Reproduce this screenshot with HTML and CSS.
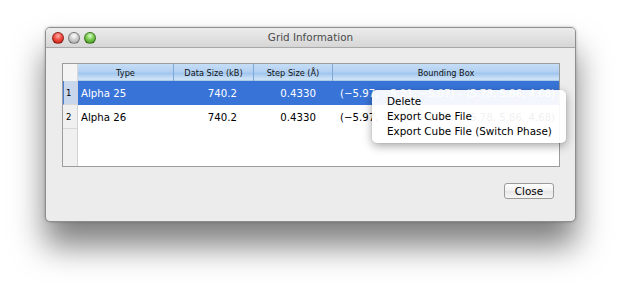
FILE: index.html
```html
<!DOCTYPE html>
<html>
<head>
<meta charset="utf-8">
<link rel="stylesheet" href="styles.css">
</head>
<body>
<div class="stage">
  <div class="window">
    <div class="titlebar">
      <div class="lights">
        <span class="light red"></span>
        <span class="light gray"></span>
        <span class="light green"></span>
      </div>
      <div class="title">Grid Information</div>
    </div>
    <div class="content">
      <div class="table">
        <div class="row head">
          <div class="cell rh"></div>
          <div class="cell hc">Type</div>
          <div class="cell hc">Data Size (kB)</div>
          <div class="cell hc">Step Size (Å)</div>
          <div class="cell hc last">Bounding Box</div>
        </div>
        <div class="row sel">
          <div class="cell rh">1</div>
          <div class="cell t">Alpha 25</div>
          <div class="cell n">740.2</div>
          <div class="cell n">0.4330</div>
          <div class="cell b">(−5.97, −5.21, −5.07) – (5.78, 5.86, 4.68)</div>
        </div>
        <div class="row">
          <div class="cell rh">2</div>
          <div class="cell t">Alpha 26</div>
          <div class="cell n">740.2</div>
          <div class="cell n">0.4330</div>
          <div class="cell b">(−5.97, −5.21, −5.07) – (5.78, 5.86, 4.68)</div>
        </div>
        <div class="filler">
          <div class="rhfill"></div>
        </div>
      </div>
      <div class="footer">
        <button class="btn">Close</button>
      </div>
    </div>
  </div>
  <div class="menu">
    <div class="item">Delete</div>
    <div class="item">Export Cube File</div>
    <div class="item">Export Cube File (Switch Phase)</div>
  </div>
</div>
</body>
</html>
```
FILE: styles.css
```css
html, body {
  margin: 0;
  padding: 0;
  background: #ffffff;
  font-family: "DejaVu Sans", Verdana, sans-serif;
}
.stage {
  position: relative;
  width: 621px;
  height: 285px;
  overflow: hidden;
  padding-top: 27px;
  box-sizing: border-box;
}
.window {
  margin-left: 45px;
  width: 531px;
  height: 195px;
  box-sizing: border-box;
  background: #ececec;
  border: 1px solid #8e8e8e;
  border-radius: 5px;
  box-shadow: 0 24px 32px rgba(0,0,0,0.5), 0 0 3px rgba(0,0,0,0.25);
  display: flex;
  flex-direction: column;
  overflow: hidden;
}
.titlebar {
  height: 19px;
  background: linear-gradient(#ececec, #d6d6d6);
  border-bottom: 1px solid #a8a8a8;
  display: flex;
  align-items: center;
  position: relative;
}
.lights {
  display: flex;
  gap: 4px;
  padding-left: 6px;
}
.light {
  width: 12px;
  height: 12px;
  border-radius: 50%;
  box-sizing: border-box;
  border: 1px solid rgba(0,0,0,0.35);
}
.light.red { background: radial-gradient(circle at 50% 30%, #ffb0a8 0%, #ef4c40 45%, #b8160c 100%); }
.light.gray { background: radial-gradient(circle at 50% 30%, #ffffff 0%, #d0d0d0 45%, #9a9a9a 100%); }
.light.green { background: radial-gradient(circle at 50% 30%, #d8ffc8 0%, #78c94e 45%, #3a8a18 100%); }
.title {
  position: absolute;
  left: 0;
  right: 0;
  text-align: center;
  font-size: 10.4px;
  color: #4a4a4a;
  line-height: 19px;
  pointer-events: none;
}
.content {
  padding: 15px 16px 0 16px;
  display: flex;
  flex-direction: column;
}
.table {
  width: 498px;
  height: 104px;
  box-sizing: border-box;
  border: 1px solid #9c9c9c;
  background: #ffffff;
  display: flex;
  flex-direction: column;
}
.row {
  display: grid;
  grid-template-columns: 15px 96px 80px 79px 226px;
  height: 24px;
  font-size: 10.2px;
  color: #000;
}
.row.head {
  height: 17px;
  font-size: 8.2px;
  background: linear-gradient(#c6ddf6 0%, #b3d1f2 45%, #a1c6ee 55%, #d0e4f8 90%, #9ebfe2 100%);
}
.cell {
  display: flex;
  align-items: center;
  white-space: nowrap;
  overflow: hidden;
  box-sizing: border-box;
}
.head .cell.rh {
  background: #f4f4f4;
  border-right: 1px solid #d8d8d8;
  border-bottom: none;
}
.hc {
  justify-content: center;
  border-right: 1px solid #7fa8d6;
  color: #111;
}
.hc.last { border-right: none; }
.cell.rh {
  background: #f0f0f0;
  border-right: 1px solid #d2d2d2;
  border-bottom: 1px solid #d8d8d8;
  font-size: 8.5px;
  padding-left: 3px;
}
.sel {
  background: #3874d8;
  color: #ffffff;
}
.sel .cell.rh {
  background: #c9d7ec;
  color: #000;
  border-left: 1px solid #4a80d8;
  padding-left: 2px;
}
.t { padding-left: 3px; }
.n { justify-content: flex-end; padding-right: 17px; }
.b { padding-left: 7px; overflow: visible; }
.filler {
  flex: 1;
  display: flex;
}
.rhfill {
  width: 15px;
  background: #f0f0f0;
  border-right: 1px solid #d2d2d2;
  box-sizing: border-box;
}
.footer {
  display: flex;
  justify-content: flex-end;
  padding-top: 16px;
  padding-right: 5px;
}
.btn {
  width: 50px;
  height: 16px;
  padding: 0;
  font-family: "DejaVu Sans", Verdana, sans-serif;
  font-size: 10.4px;
  color: #000;
  background: linear-gradient(#ffffff, #f0f0f0 50%, #e6e6e6 51%, #f6f6f6);
  border: 1px solid #9a9a9a;
  border-radius: 3px;
  line-height: 14px;
}
.menu {
  position: absolute;
  left: 372px;
  top: 90px;
  width: 194px;
  height: 53px;
  box-sizing: border-box;
  padding: 4px 0 4px 15px;
  background: rgba(255,255,255,0.94);
  border-radius: 5px;
  box-shadow: 0 3px 10px rgba(0,0,0,0.35), 0 0 1px rgba(0,0,0,0.3);
}
.item {
  height: 15px;
  line-height: 15px;
  font-size: 10.4px;
  color: #000;
  white-space: nowrap;
}
```
